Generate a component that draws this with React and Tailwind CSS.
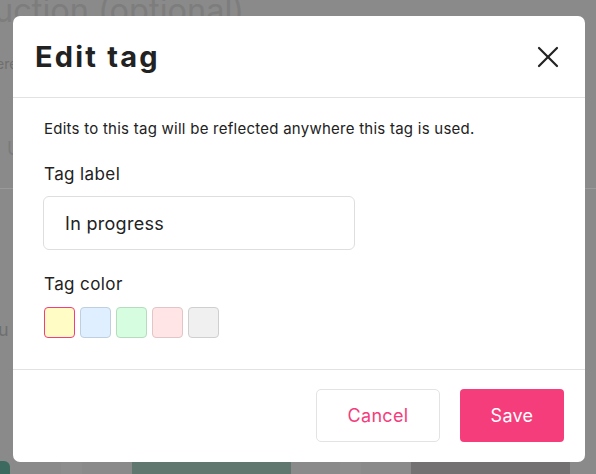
import React, { useState } from "react";

const swatches = [
    { id: "yellow", bg: "bg-[#fffcc6]", border: "border-[#c9c79c]" },
    { id: "blue", bg: "bg-[#e0efff]", border: "border-[#bfcfe0]" },
    { id: "green", bg: "bg-[#d6fddf]", border: "border-[#b6dcbf]" },
    { id: "red", bg: "bg-[#ffe5e5]", border: "border-[#e0c6c6]" },
    { id: "gray", bg: "bg-[#f0f0f0]", border: "border-[#cfcfcf]" },
];

function Backdrop() {
    return (
        <div className="absolute inset-0 overflow-hidden bg-[#8a8a8a]">
            <p className="-mt-[10px] -ml-[6px] text-[32.5px] leading-[42px] text-[#7d7d7d]">
                uction (optional)
            </p>
            <p className="mt-[22px] -ml-[4px] text-[14px] leading-[20px] text-[#6f6f6f]">ere</p>
            <p className="mt-[62px] ml-[7px] text-[18px] leading-[26px] text-[#7a7a7a]">U</p>
            <div className="mt-[26px] h-px bg-[#9a9a9a]" />
            <p className="mt-[128px] -ml-[2px] text-[18px] leading-[26px] text-[#6f6f6f]">u</p>
            <div className="absolute bottom-0 left-0 right-0 flex h-[13px]">
                <div className="w-[10px] rounded-tr-[6px] bg-[#3d6a5e]" />
                <div className="w-[51px]" />
                <div className="w-[21px] bg-[#8d8d8d]" />
                <div className="w-[50px]" />
                <div className="w-[159px] bg-[#607770]" />
                <div className="w-[49px]" />
                <div className="w-[21px] bg-[#8d8d8d]" />
                <div className="w-[50px]" />
                <div className="w-[159px] bg-[#737172]" />
            </div>
        </div>
    );
}

function CloseIcon() {
    return (
        <svg width="22" height="22" viewBox="0 0 22 22" fill="none" stroke="currentColor" strokeWidth="2.2" strokeLinecap="round">
            <path d="M2 2 L20 20" />
            <path d="M20 2 L2 20" />
        </svg>
    );
}

export default function App() {
    const [label, setLabel] = useState("In progress");
    const [color, setColor] = useState("yellow");

    return (
        <div
            className="relative h-[474px] w-[596px] overflow-hidden"
            style={{ fontFamily: "Inter, 'Liberation Sans', sans-serif" }}
        >
            <Backdrop />

            <div className="absolute left-[13px] top-[16px] w-[572px] rounded-[7px] bg-white text-[#222]">
                <header className="flex h-[82px] items-center justify-between border-b border-[#e2e2e2] pl-[22px] pr-[26px]">
                    <h1 className="text-[29px] font-bold tracking-[2.2px]">Edit tag</h1>
                    <button className="text-[#222]">
                        <CloseIcon />
                    </button>
                </header>

                <div className="px-[31px] pt-[21px] pb-[31px]">
                    <p className="text-[15px] leading-[20px] tracking-[0.25px] text-[#222]">
                        Edits to this tag will be reflected anywhere this tag is used.
                    </p>

                    <label htmlFor="tag-label" className="mt-[23px] block text-[17px] leading-[24px] tracking-[0.4px]">
                        Tag label
                    </label>
                    <input
                        id="tag-label"
                        value={label}
                        onChange={(e) => setLabel(e.target.value)}
                        className="mt-[10px] h-[54px] w-[312px] -ml-[1px] rounded-[6px] border border-[#dedede] px-[21px] text-[18px] tracking-[0.3px] text-[#222] outline-none"
                    />

                    <p className="mt-[22px] text-[17px] leading-[24px] tracking-[0.4px]">Tag color</p>
                    <div className="mt-[11px] flex gap-[5px]">
                        {swatches.map((s) => (
                            <button
                                key={s.id}
                                onClick={() => setColor(s.id)}
                                className={`h-[31px] w-[31px] rounded-[4px] border ${s.bg} ${
                                    color === s.id ? "border-[#f33d7c]" : s.border
                                }`}
                            />
                        ))}
                    </div>
                </div>

                <footer className="flex justify-end gap-[20px] border-t border-[#e2e2e2] pt-[19px] pb-[20px] pr-[21px]">
                    <button className="h-[53px] w-[124px] rounded-[5px] border border-[#e3e3e3] text-[18px] tracking-[0.3px] text-[#f33d7c]">
                        Cancel
                    </button>
                    <button className="h-[53px] w-[104px] rounded-[4px] bg-[#f63d7c] text-[18px] tracking-[0.3px] text-white">
                        Save
                    </button>
                </footer>
            </div>
        </div>
    );
}
